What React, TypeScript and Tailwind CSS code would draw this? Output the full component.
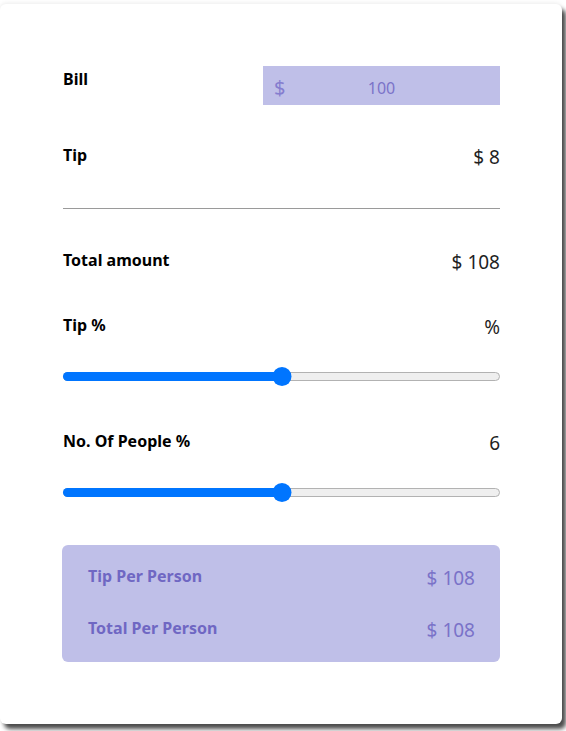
import { useState } from 'react';

const Row = ({ label, value }: { label: string; value: string }) => (
  <div className="flex h-[27px] items-start justify-between">
    <span className="text-[16px] leading-6 font-bold text-black">{label}</span>
    <span className="mt-[1px] text-[19px] leading-[27px] text-[#1f1f1f]">{value}</span>
  </div>
);

const Slider = ({ value, onChange }: { value: number; onChange: (v: number) => void }) => (
  <div className="relative h-[19px]">
    <div className="absolute left-0 right-0 top-[5px] h-[9px] rounded-full border border-[#b2b2b2] bg-[#efefef]" />
    <div
      className="absolute left-0 top-[5px] h-[9px] rounded-full bg-[#0075ff]"
      style={{ width: `${value}%` }}
    />
    <div
      className="absolute top-0 h-[19px] w-[19px] -translate-x-1/2 rounded-full bg-[#0075ff]"
      style={{ left: `${value}%` }}
    />
    <input
      type="range"
      min={0}
      max={100}
      value={value}
      onChange={(e) => onChange(Number(e.target.value))}
      className="absolute inset-0 m-0 w-full cursor-pointer opacity-0"
    />
  </div>
);

export default function App() {
  const [tip, setTip] = useState(50);
  const [people, setPeople] = useState(50);

  return (
    <div className="min-h-screen bg-white pt-[4px] font-['Noto_Sans',sans-serif]">
      <div className="w-[562px] h-[720px] rounded-md bg-white shadow-[4px_5px_4px_rgba(0,0,0,0.7),0_-1px_4px_rgba(0,0,0,0.08)] pt-[62px] pl-[63px] pr-[62px]">
        <div className="flex items-start justify-between">
          <span className="text-[16px] leading-6 font-bold text-black mt-[1px]">Bill</span>
          <div className="relative w-[237px] h-[39px] bg-[#bfbfe8] flex items-center">
            <span className="absolute left-[11px] top-[10px] text-[20px] leading-6 text-[#857dcf]">$</span>
            <input
              defaultValue="100"
              className="w-full h-full bg-transparent text-center text-[16px] text-[#7b73c9] outline-none mt-[5px]"
            />
          </div>
        </div>

        <div className="mt-[38px]">
          <Row label="Tip" value="$ 8" />
        </div>

        <div className="mt-[38px] h-px bg-[#9a9a9a]" />

        <div className="mt-[39px]">
          <Row label="Total amount" value="$ 108" />
        </div>

        <div className="mt-[38px]">
          <Row label="Tip %" value="%" />
        </div>
        <div className="mt-[27px]">
          <Slider value={tip} onChange={setTip} />
        </div>

        <div className="mt-[43px]">
          <Row label="No. Of People %" value="6" />
        </div>
        <div className="mt-[27px]">
          <Slider value={people} onChange={setPeople} />
        </div>

        <div className="mt-[43px] -ml-px rounded-md bg-[#bfbfe8] pt-[19px] pb-[18px] pl-[26px] pr-[25px] flex flex-col gap-[24px]">
          <div className="flex items-start justify-between">
            <span className="text-[16px] leading-6 font-bold text-[#6f67c3]">Tip Per Person</span>
            <span className="mt-[1px] text-[19px] leading-[27px] text-[#7a72c8]">$ 108</span>
          </div>
          <div className="flex items-start justify-between">
            <span className="text-[16px] leading-6 font-bold text-[#6f67c3]">Total Per Person</span>
            <span className="mt-[1px] text-[19px] leading-[27px] text-[#7a72c8]">$ 108</span>
          </div>
        </div>
      </div>
    </div>
  );
}
